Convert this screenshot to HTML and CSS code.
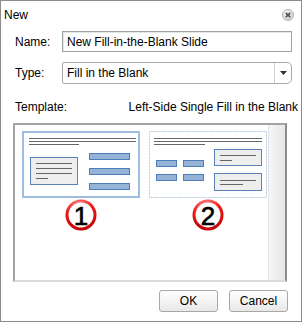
FILE: index.html
```html
<!DOCTYPE html>
<html>
<head>
    <title>New</title>
    <link rel="stylesheet" href="styles.css">
</head>
<body>
    <div class="dialog">
        <div class="titlebar">
            <span class="title">New</span>
            <svg class="close" width="12" height="12" viewBox="0 0 12 12">
                <defs>
                    <radialGradient id="cg" cx="40%" cy="35%" r="70%">
                        <stop offset="0" stop-color="#ffffff"/>
                        <stop offset="1" stop-color="#c8c8c8"/>
                    </radialGradient>
                </defs>
                <circle cx="6" cy="6" r="5.5" fill="url(#cg)" stroke="#b4b4b4"/>
                <path d="M3.8 3.8 L8.2 8.2 M8.2 3.8 L3.8 8.2" stroke="#555" stroke-width="1.8"/>
            </svg>
        </div>

        <div class="form">
            <div class="row">
                <label class="label">Name:</label>
                <div class="input">New Fill-in-the-Blank Slide</div>
            </div>
            <div class="row">
                <label class="label">Type:</label>
                <div class="select">
                    <span class="select-text">Fill in the Blank</span>
                    <span class="select-arrow">
                        <svg width="7" height="4" viewBox="0 0 7 4"><path d="M0 0 H7 L3.5 4 Z" fill="#333"/></svg>
                    </span>
                </div>
            </div>
        </div>

        <div class="template-head">
            <span>Template:</span>
            <span>Left-Side Single Fill in the Blank</span>
        </div>

        <div class="template-box">
            <div class="templates">
                <div class="template">
                    <svg class="thumb" width="118" height="67" viewBox="0 0 118 67">
                        <rect x="1" y="1" width="116" height="65" fill="#fff" stroke="#9ebde0" stroke-width="2"/>
                        <g stroke="#666" stroke-width="1">
                            <path d="M7 7.5 H114 M7 10.5 H114 M7 13.5 H57"/>
                        </g>
                        <rect x="8.5" y="26.5" width="47" height="27" fill="#eeeeee" stroke="#5a82b8"/>
                        <g stroke="#666" stroke-width="1">
                            <path d="M14 32.5 H50 M14 37.5 H50 M14 42.5 H50 M14 47.5 H26"/>
                        </g>
                        <g fill="#95b3d7" stroke="#4f7fb8">
                            <rect x="67.5" y="22.5" width="40" height="6"/>
                            <rect x="67.5" y="37.5" width="40" height="6"/>
                            <rect x="67.5" y="52.5" width="40" height="6"/>
                        </g>
                    </svg>
                    <svg class="badge" width="32" height="32" viewBox="0 0 32 32">
                        <defs>
                            <radialGradient id="rg1" cx="45%" cy="25%" r="75%">
                                <stop offset="0" stop-color="#ffb0b0"/>
                                <stop offset="0.55" stop-color="#ee1a1a"/>
                                <stop offset="1" stop-color="#c00000"/>
                            </radialGradient>
                        </defs>
                        <circle cx="16" cy="16" r="15.5" fill="url(#rg1)"/>
                        <circle cx="16" cy="16" r="12.5" fill="#fff"/>
                        <text x="16" y="25.5" class="badge-num">1</text>
                    </svg>
                </div>
                <div class="template">
                    <svg class="thumb" width="118" height="67" viewBox="0 0 118 67">
                        <rect x="0.5" y="0.5" width="117" height="66" fill="#fff" stroke="#b4c8e0" stroke-dasharray="2 1"/>
                        <g stroke="#666" stroke-width="1">
                            <path d="M5 7.5 H113 M5 10.5 H113 M5 13.5 H56"/>
                        </g>
                        <g fill="#95b3d7" stroke="#4f7fb8">
                            <rect x="7.5" y="29.5" width="20" height="6"/>
                            <rect x="34.5" y="29.5" width="20" height="6"/>
                            <rect x="7.5" y="43.5" width="20" height="6"/>
                            <rect x="34.5" y="43.5" width="20" height="6"/>
                        </g>
                        <g fill="#eeeeee" stroke="#5a82b8">
                            <rect x="65.5" y="18.5" width="47" height="16"/>
                            <rect x="65.5" y="42.5" width="47" height="17"/>
                        </g>
                        <g stroke="#666" stroke-width="1">
                            <path d="M71 24.5 H107 M71 29.5 H83 M71 49.5 H107 M71 53.5 H94"/>
                        </g>
                    </svg>
                    <svg class="badge" width="32" height="32" viewBox="0 0 32 32">
                        <defs>
                            <radialGradient id="rg2" cx="45%" cy="25%" r="75%">
                                <stop offset="0" stop-color="#ffb0b0"/>
                                <stop offset="0.55" stop-color="#ee1a1a"/>
                                <stop offset="1" stop-color="#c00000"/>
                            </radialGradient>
                        </defs>
                        <circle cx="16" cy="16" r="15.5" fill="url(#rg2)"/>
                        <circle cx="16" cy="16" r="12.5" fill="#fff"/>
                        <text x="16" y="25.5" class="badge-num">2</text>
                    </svg>
                </div>
            </div>
            <div class="scrollbar"></div>
        </div>

        <div class="buttons">
            <button class="button">OK</button>
            <button class="button">Cancel</button>
        </div>
    </div>
</body>
</html>
```

FILE: styles.css
```css
body {
    margin: 0;
    font-family: "Liberation Sans", Arial, sans-serif;
    font-size: 12px;
    color: #000;
}
.dialog {
    width: 302px;
    height: 322px;
    box-sizing: border-box;
    border: 1px solid #8c8c8c;
    background: #fff;
    display: flex;
    flex-direction: column;
}
.titlebar {
    height: 27px;
    display: flex;
    align-items: center;
    justify-content: space-between;
    padding: 0 7px 0 3px;
}
.close {
    display: block;
}
.form {
    margin-top: 3px;
    display: flex;
    flex-direction: column;
    gap: 10px;
}
.row {
    display: flex;
    align-items: center;
    padding-left: 14px;
}
.label {
    width: 47px;
}
.input {
    width: 230px;
    height: 21px;
    box-sizing: border-box;
    border: 1px solid #9ca79c;
    box-shadow: inset 1px 1px 0 #e4e8e4;
    padding: 2px 4px 0;
    line-height: 17px;
}
.select {
    width: 230px;
    height: 22px;
    box-sizing: border-box;
    border: 1px solid #a8a8a8;
    border-radius: 2px 5px 5px 2px;
    display: flex;
}
.select-text {
    flex: 1;
    padding-left: 4px;
    line-height: 20px;
}
.select-arrow {
    width: 16px;
    border-left: 1px solid #d0d0d0;
    display: flex;
    align-items: center;
    justify-content: center;
}
.select-arrow svg {
    display: block;
}
.template-head {
    display: flex;
    justify-content: space-between;
    padding: 0 3px 0 14px;
    margin-top: 16px;
    height: 14px;
}
.template-box {
    margin: 9px 0 0 12px;
    width: 274px;
    height: 159px;
    box-sizing: border-box;
    border-style: solid;
    border-width: 2px;
    border-color: #a4a4a4 #8c8c8c #dadada #a4a4a4;
    display: flex;
}
.templates {
    flex: 1;
    display: flex;
    gap: 9px;
    padding: 6px 0 0 7px;
}
.template {
    width: 118px;
    display: flex;
    flex-direction: column;
    align-items: center;
}
.thumb {
    display: block;
}
.badge {
    display: block;
    margin-top: 1px;
}
.badge-num {
    font-family: "Liberation Sans", Arial, sans-serif;
    font-size: 26px;
    text-anchor: middle;
    fill: #000;
    stroke: #000;
    stroke-width: 0.6;
}
.scrollbar {
    width: 16px;
    border-left: 1px solid #e4e4e4;
    background: linear-gradient(to right, #f6f6f6, #e6e6e6);
}
.buttons {
    display: flex;
    justify-content: flex-end;
    gap: 11px;
    padding: 8px 13px 0 0;
}
.button {
    width: 59px;
    height: 22px;
    border: 1px solid #a8a8a8;
    border-radius: 3px;
    background: linear-gradient(#ffffff, #e8e8e8);
    font-family: "Liberation Sans", Arial, sans-serif;
    font-size: 12px;
    color: #000;
    padding: 0;
}
```
